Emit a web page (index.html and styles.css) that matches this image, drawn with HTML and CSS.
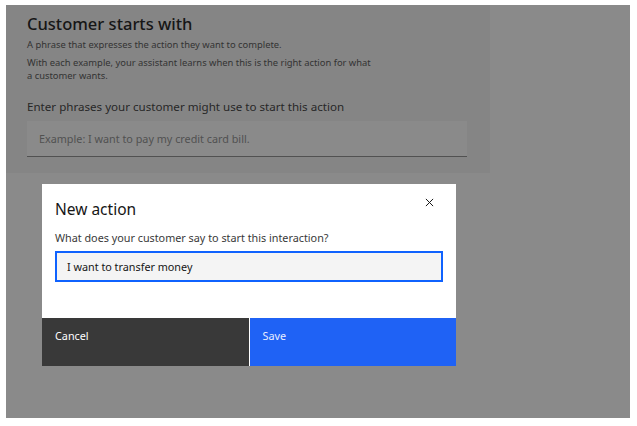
FILE: index.html
```html
<!DOCTYPE html>
<html lang="en">
<head>
<meta charset="utf-8">
<title>New action</title>
<link rel="stylesheet" href="styles.css">
</head>
<body>
<div class="frame">
  <section class="panel">
    <h2 class="panel-title">Customer starts with</h2>
    <p class="panel-text">A phrase that expresses the action they want to complete.</p>
    <p class="panel-text panel-text--wrap">With each example, your assistant learns when this is the right action for what a customer wants.</p>
    <label class="panel-label">Enter phrases your customer might use to start this action</label>
    <div class="panel-input">Example: I want to pay my credit card bill.</div>
  </section>

  <div class="overlay">
    <div class="modal" role="dialog">
      <div class="modal-body">
        <div class="modal-head">
          <h3 class="modal-title">New action</h3>
          <button class="modal-close" aria-label="Close">
            <svg width="9" height="9" viewBox="0 0 10 10"><path d="M1 1 L9 9 M9 1 L1 9" stroke="#161616" stroke-width="1.1" fill="none"/></svg>
          </button>
        </div>
        <label class="modal-label">What does your customer say to start this interaction?</label>
        <div class="modal-input">I want to transfer money</div>
      </div>
      <div class="modal-footer">
        <button class="btn btn--secondary">Cancel</button>
        <button class="btn btn--primary">Save</button>
      </div>
    </div>
  </div>
</div>
</body>
</html>
```

FILE: styles.css
```css
* { box-sizing: border-box; }

html, body {
  margin: 0;
  background: #ffffff;
  font-family: "Noto Sans", "Open Sans", sans-serif;
}

body {
  padding: 5px 7px 8px 6px;
}

.frame {
  position: relative;
  width: 624px;
  height: 413px;
  background: #ffffff;
  overflow: hidden;
}

.panel {
  width: 484px;
  height: 168px;
  background: #f4f4f4;
  padding: 9px 23px 0 21px;
}

.panel-title {
  margin: 0;
  font-size: 16.5px;
  line-height: 20px;
  font-weight: 500;
  color: #161616;
}

.panel-text {
  margin: 4px 0 0;
  font-size: 9.4px;
  line-height: 13px;
  color: #525252;
}

.panel-text--wrap {
  margin-top: 5px;
  width: 347px;
}

.panel-label {
  display: block;
  margin-top: 17px;
  font-size: 11.6px;
  line-height: 15px;
  color: #393939;
}

.panel-input {
  margin-top: 7px;
  width: 440px;
  height: 36px;
  background: #ffffff;
  border-bottom: 1px solid #8d8d8d;
  padding: 0 12px;
  display: flex;
  align-items: center;
  font-size: 10.8px;
  color: #8d8d8d;
}

.overlay {
  position: absolute;
  inset: 0;
  background: rgba(22, 22, 22, 0.5);
  padding: 179px 0 0 36px;
}

.modal {
  width: 414px;
  background: #ffffff;
  display: flex;
  flex-direction: column;
}

.modal-body {
  height: 134px;
  padding: 12px 13px 0 13px;
}

.modal-head {
  display: flex;
  justify-content: space-between;
  align-items: flex-start;
}

.modal-title {
  margin: 3px 0 0;
  font-size: 15.5px;
  line-height: 20px;
  font-weight: 400;
  color: #161616;
}

.modal-close {
  border: 0;
  background: none;
  padding: 0;
  margin: 2px 9px 0 0;
  width: 9px;
  height: 9px;
  display: flex;
}

.modal-label {
  display: block;
  margin-top: 12px;
  font-size: 10.8px;
  line-height: 14px;
  color: #393939;
}

.modal-input {
  margin-top: 6px;
  width: 388px;
  height: 31px;
  background: #f4f4f4;
  border: 2px solid #0f62fe;
  padding: 0 10px;
  display: flex;
  align-items: center;
  font-size: 10.8px;
  color: #161616;
}

.modal-footer {
  display: flex;
  gap: 1px;
  height: 48px;
}

.btn {
  flex: 1;
  border: 0;
  margin: 0;
  text-align: left;
  align-self: stretch;
  padding: 0 13px 14px;
  font-family: inherit;
  font-size: 10.8px;
  color: #ffffff;
  display: flex;
  align-items: center;
}

.btn--secondary {
  background: #393939;
}

.btn--primary {
  background: #1f62f5;
  color: #e8eeff;
}
```
